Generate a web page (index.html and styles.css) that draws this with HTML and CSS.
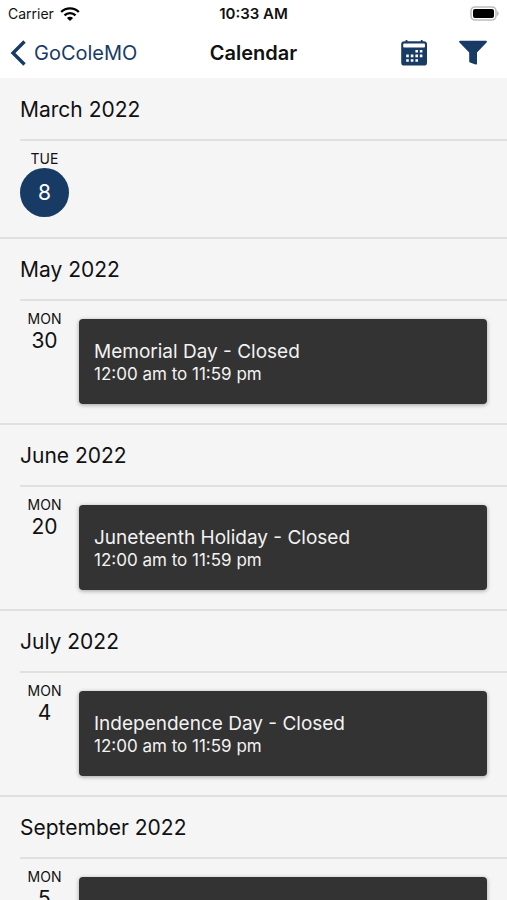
FILE: index.html
```html
<!DOCTYPE html>
<html lang="en">
<head>
  <meta charset="UTF-8" />
  <meta name="viewport" content="width=device-width, initial-scale=1.0"/>
  <title>Calendar</title>
  <link rel="stylesheet" href="styles.css">
</head>
<body>
  <header class="top">
    <div class="status-bar">
      <div class="carrier">
        <span>Carrier</span>
        <svg width="20" height="14" viewBox="0 0 20 14" fill="none" stroke="#000" stroke-width="2.4" aria-hidden="true">
          <path d="M1.2 5C6 0.2 14 0.2 18.8 5"/>
          <path d="M4.5 8.4C7.5 5.4 12.5 5.4 15.5 8.4"/>
          <path d="M10 14L6.9 10.9C8.6 9.2 11.4 9.2 13.1 10.9Z" fill="#000" stroke="none"/>
        </svg>
      </div>
      <span class="time">10:33 AM</span>
      <svg class="battery" width="31" height="15" viewBox="0 0 31 15" aria-hidden="true">
        <rect x="3" y="1" width="25" height="13" rx="4" fill="#fff" stroke="#bdbdbd" stroke-width="1.6"/>
        <rect x="5" y="3" width="21" height="9" rx="2" fill="#000"/>
        <path d="M29 5C31.3 6 31.3 9 29 10Z" fill="#bdbdbd"/>
      </svg>
    </div>

    <nav class="nav-bar">
      <a class="back" href="#">
        <svg width="16" height="26" viewBox="0 0 16 26" fill="none" stroke="currentColor" stroke-width="3.4" aria-hidden="true">
          <path d="M14.5 1.5L3 13L14.5 24.5"/>
        </svg>
        <span>GoColeMO</span>
      </a>
      <h1>Calendar</h1>
      <div class="actions">
        <button type="button" aria-label="Month view">
          <svg width="28" height="28" viewBox="0 0 28 28" aria-hidden="true">
            <rect x="1.2" y="2.2" width="25.8" height="24.4" rx="3.2" fill="#183b65"/>
            <rect x="3.2" y="4.6" width="21.8" height="3.8" rx="1" fill="#fff"/>
            <path d="M5.6 1h1.8v2.6H5.6zM20.8 1h1.8v2.6h-1.8z" fill="#183b65"/>
            <path d="M15.4 11h2.6v2.6h-2.6zM19.8 11h2.6v2.6h-2.6zM6.2 15.6h2.6v2.6H6.2zM10.8 15.6h2.6v2.6h-2.6zM15.4 15.6h2.6v2.6h-2.6zM19.8 15.6h2.6v2.6h-2.6zM6.2 20.2h2.6v2.6H6.2zM10.8 20.2h2.6v2.6h-2.6zM15.4 20.2h2.6v2.6h-2.6z" fill="#fff"/>
          </svg>
        </button>
        <button type="button" aria-label="Filter">
          <svg width="28" height="28" viewBox="0 0 28 28" aria-hidden="true">
            <path d="M1.2 1.8H26.8C28 1.8 28.2 2.8 27.5 3.6L18 13.6V24.6C18 25.5 17.4 25.8 16.5 25.4L11 23.4C10.4 23.1 10.2 22.8 10.2 22.2V13.6L0.5 3.6C-0.2 2.8 0 1.8 1.2 1.8Z" fill="#183b65"/>
          </svg>
        </button>
      </div>
    </nav>
  </header>

  <main class="list">
    <section class="month">
      <h2>March 2022</h2>
      <div class="day">
        <div class="date">
          <span class="weekday">TUE</span>
          <span class="number today">8</span>
        </div>
      </div>
    </section>

    <section class="month">
      <h2>May 2022</h2>
      <div class="day">
        <div class="date">
          <span class="weekday">MON</span>
          <span class="number">30</span>
        </div>
        <article class="event">
          <h3>Memorial Day - Closed</h3>
          <p>12:00 am to 11:59 pm</p>
        </article>
      </div>
    </section>

    <section class="month">
      <h2>June 2022</h2>
      <div class="day">
        <div class="date">
          <span class="weekday">MON</span>
          <span class="number">20</span>
        </div>
        <article class="event">
          <h3>Juneteenth Holiday - Closed</h3>
          <p>12:00 am to 11:59 pm</p>
        </article>
      </div>
    </section>

    <section class="month">
      <h2>July 2022</h2>
      <div class="day">
        <div class="date">
          <span class="weekday">MON</span>
          <span class="number">4</span>
        </div>
        <article class="event">
          <h3>Independence Day - Closed</h3>
          <p>12:00 am to 11:59 pm</p>
        </article>
      </div>
    </section>

    <section class="month">
      <h2>September 2022</h2>
      <div class="day">
        <div class="date">
          <span class="weekday">MON</span>
          <span class="number">5</span>
        </div>
        <article class="event"></article>
      </div>
    </section>
  </main>
</body>
</html>
```

FILE: styles.css
```css
:root {
  --navy: #183b65;
  --bg: #f5f5f5;
  --line: #e0e0e0;
  --card: #333;
}

* {
  box-sizing: border-box;
}

body {
  display: flex;
  flex-direction: column;
  height: 100vh;
  margin: 0;
  font-family: Inter, "Liberation Sans", sans-serif;
  background: var(--bg);
  color: #111;
}

h1, h2, h3, p {
  margin: 0;
  font-weight: 400;
}

.top {
  flex: none;
  background: #fff;
}

.status-bar,
.nav-bar {
  display: grid;
  grid-template-columns: 1fr auto 1fr;
  align-items: center;
}

.status-bar {
  height: 27px;
  padding: 0 8px;
  font-size: 14px;
}

.carrier {
  display: flex;
  align-items: center;
  gap: 6px;
}

.time {
  font-size: 15px;
  font-weight: 600;
}

.battery {
  justify-self: end;
}

.nav-bar {
  height: 51px;
  padding: 0 10px;
}

.back {
  display: flex;
  align-items: center;
  gap: 8px;
  color: var(--navy);
  font-size: 20px;
  text-decoration: none;
}

.nav-bar h1 {
  font-size: 20px;
  font-weight: 600;
}

.actions {
  display: flex;
  justify-content: flex-end;
  gap: 31px;
  padding-right: 10px;
}

.actions button {
  display: flex;
  padding: 0;
  border: none;
  background: none;
  cursor: pointer;
}

.list {
  flex: 1;
  overflow-y: auto;
  padding-top: 1px;
  scrollbar-width: none;
}

.month {
  border-bottom: 2px solid var(--line);
}

.month h2 {
  height: 62px;
  margin-left: 20px;
  border-bottom: 2px solid var(--line);
  font-size: 21px;
  line-height: 62px;
}

.day {
  display: flex;
  align-items: flex-start;
  gap: 10px;
  min-height: 96px;
  padding: 9px 20px 19px;
}

.date {
  display: flex;
  flex-direction: column;
  align-items: center;
  width: 49px;
}

.weekday {
  font-size: 14px;
  line-height: 18px;
}

.number {
  font-size: 21px;
  line-height: 26px;
}

.today {
  width: 49px;
  border-radius: 50%;
  background: var(--navy);
  color: #fff;
  line-height: 49px;
  text-align: center;
}

.event {
  flex: 1;
  min-height: 85px;
  margin-top: 9px;
  padding: 22px 15px 19px;
  border-radius: 4px;
  background: var(--card);
  box-shadow: 0 1px 4px rgba(0, 0, 0, 0.35);
  color: #f2f2f2;
}

.event h3 {
  font-size: 19px;
  line-height: 22px;
}

.event p {
  font-size: 17px;
  line-height: 22px;
}
```
